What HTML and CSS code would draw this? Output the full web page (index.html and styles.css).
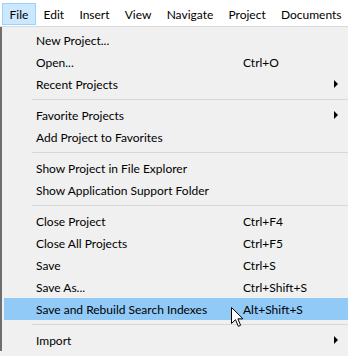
FILE: index.html
```html
<!DOCTYPE html>
<html lang="en">
<head>
  <meta charset="UTF-8">
  <title>File menu</title>
  <link rel="stylesheet" href="styles.css">
</head>
<body>
  <div class="menubar">
    <span class="top-item active">File</span>
    <span class="top-item">Edit</span>
    <span class="top-item">Insert</span>
    <span class="top-item">View</span>
    <span class="top-item">Navigate</span>
    <span class="top-item">Project</span>
    <span class="top-item">Documents</span>
  </div>

  <div class="popup">
    <div class="row"><span class="label">New Project...</span></div>
    <div class="row"><span class="label">Open...</span><span class="keys">Ctrl+O</span></div>
    <div class="row"><span class="label">Recent Projects</span><span class="keys"></span><span class="arrow"></span></div>
    <div class="sep"></div>
    <div class="row"><span class="label">Favorite Projects</span><span class="keys"></span><span class="arrow"></span></div>
    <div class="row"><span class="label">Add Project to Favorites</span></div>
    <div class="sep"></div>
    <div class="row"><span class="label">Show Project in File Explorer</span></div>
    <div class="row"><span class="label">Show Application Support Folder</span></div>
    <div class="sep"></div>
    <div class="row"><span class="label">Close Project</span><span class="keys">Ctrl+F4</span></div>
    <div class="row"><span class="label">Close All Projects</span><span class="keys">Ctrl+F5</span></div>
    <div class="row"><span class="label">Save</span><span class="keys">Ctrl+S</span></div>
    <div class="row"><span class="label">Save As...</span><span class="keys">Ctrl+Shift+S</span></div>
    <div class="row hover"><span class="label">Save and Rebuild Search Indexes</span><span class="keys">Alt+Shift+S</span></div>
    <div class="sep"></div>
    <div class="row"><span class="label">Import</span><span class="keys"></span><span class="arrow"></span></div>
  </div>

  <!-- mouse pointer -->
  <svg class="cursor" width="13" height="21" viewBox="0 0 13 21">
    <path d="M0.5 0.5 L0.5 16.5 L4.5 12.7 L7.3 19.3 L9.6 18.3 L6.9 11.8 L12 11.8 Z" fill="#fff" stroke="#000" stroke-width="1" stroke-linejoin="miter"/>
  </svg>
</body>
</html>
```

FILE: styles.css
```css
body {
  margin: 0;
  width: 348px;
  height: 356px;
  overflow: hidden;
  position: relative;
  font-family: Lato, "Noto Sans", sans-serif;
  font-size: 12px;
  color: #000;
  background: #f0f0f0;
}

/* barra de menus */
.menubar {
  display: flex;
  height: 23px;
  padding: 3px 0 0 2px;
  background: #fff;
  border-bottom: 1px solid #d9d9d9;
}

.top-item {
  display: flex;
  align-items: center;
  height: 20px;
  padding: 0 6.6px;
  border: 1px solid transparent;
}

.top-item.active {
  background: #cce8ff;
  border-color: #99d1ff;
}

/* menu desplegable */
.popup {
  width: 360px;
  padding: 2px 0 0 2px;
  border-left: 2px solid #6e6e6e;
  background: #f0f0f0;
}

.row {
  display: grid;
  grid-template-columns: 32px 207px 91px 10px;
  align-items: center;
  height: 22px;
}

.row .label {
  grid-column: 2;
  white-space: nowrap;
}

.row .keys {
  grid-column: 3;
  white-space: nowrap;
}

.row.hover {
  background: #91c9f7;
}

.arrow {
  grid-column: 4;
  width: 0;
  height: 0;
  border-left: 4px solid #000;
  border-top: 4px solid transparent;
  border-bottom: 4px solid transparent;
}

.sep {
  height: 1px;
  margin: 4px 0 4px 28px;
  background: #d7d7d7;
}

.cursor {
  position: absolute;
  left: 231px;
  top: 307px;
}
```
